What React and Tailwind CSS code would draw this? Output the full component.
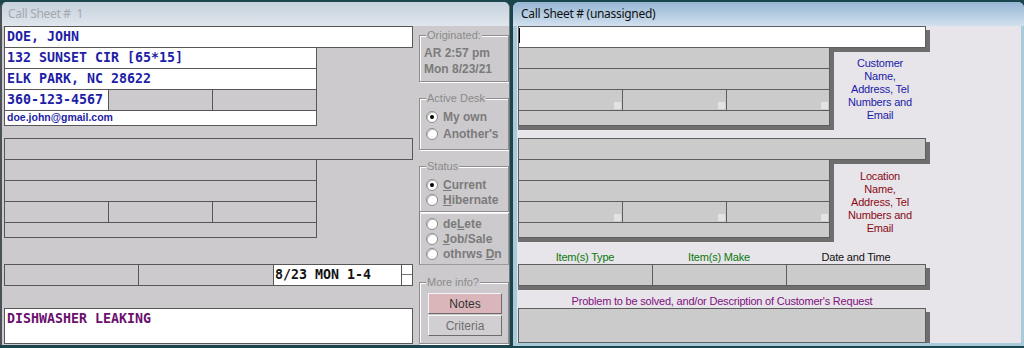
import React from "react";

const MONO = "font-['DejaVu_Sans_Mono','Liberation_Mono',monospace] font-bold text-[13.3px] leading-none";
const SANS = "font-['Liberation_Sans',Arial,sans-serif]";
const LB = "border-[#575757]";
const RB = "border-[#5e5e5e]";
const BLUE = "text-[#1e1ea6]";
const SHADOW = "shadow-[4px_4px_0_#6e6e6e,0_4px_0_#6e6e6e]";

function Radio({ checked, h = "h-[15px]", children }) {
  return (
    <div className={`flex items-center ${h} pl-[6px]`}>
      <span className="w-[12px] h-[12px] shrink-0 rounded-full bg-white border border-[#8c8c8c] shadow-[inset_1px_1px_0_#c4c4c4] flex items-center justify-center">
        {checked && <span className="w-[4px] h-[4px] rounded-full bg-black" />}
      </span>
      <span className={`ml-[5px] ${SANS} text-[12px] font-bold text-[#7b7b7b] leading-none whitespace-nowrap`}>{children}</span>
    </div>
  );
}

function Group({ label, className = "", children }) {
  return (
    <div className={`relative shrink-0 border border-[#8d8d8d] shadow-[inset_1px_1px_0_#fff,1px_1px_0_#fff] ${className}`}>
      {label && (
        <span className={`absolute left-[6px] -top-[8px] px-px bg-[#cdcacd] ${SANS} text-[11px] leading-[14px] text-[#8a8a8a] whitespace-nowrap`}>
          {label}
        </span>
      )}
      {children}
    </div>
  );
}

function LeftFields() {
  const cellText = `flex items-center pl-[2px] pb-px ${MONO}`;
  return (
    <div className="w-[409px] shrink-0 flex flex-col">
      <div className={`h-[22px] border ${LB} bg-white ${cellText} ${BLUE}`}>DOE, JOHN</div>
      <div className={`-mt-px w-[313px] h-[22px] border ${LB} bg-white ${cellText} ${BLUE}`}>132 SUNSET CIR [65*15]</div>
      <div className={`-mt-px w-[313px] h-[22px] border ${LB} bg-white ${cellText} ${BLUE}`}>ELK PARK, NC 28622</div>
      <div className={`-mt-px w-[313px] h-[22px] border ${LB} flex`}>
        <div className={`w-[104px] border-r ${LB} bg-white ${cellText} ${BLUE}`}>360-123-4567</div>
        <div className={`w-[104px] border-r ${LB}`} />
        <div className="flex-1" />
      </div>
      <div className={`-mt-px w-[313px] h-[16px] border ${LB} bg-white flex items-center pl-[2px] ${SANS} text-[10.5px] font-bold ${BLUE}`}>
        doe.john@gmail.com
      </div>

      <div className={`mt-[12px] h-[22px] border ${LB}`} />
      <div className={`-mt-px w-[313px] h-[22px] border ${LB}`} />
      <div className={`-mt-px w-[313px] h-[22px] border ${LB}`} />
      <div className={`-mt-px w-[313px] h-[22px] border ${LB} flex`}>
        <div className={`w-[104px] border-r ${LB}`} />
        <div className={`w-[104px] border-r ${LB}`} />
        <div className="flex-1" />
      </div>
      <div className={`-mt-px w-[313px] h-[16px] border ${LB}`} />

      <div className={`mt-[26px] h-[22px] border ${LB} flex`}>
        <div className={`w-[134px] border-r ${LB}`} />
        <div className={`w-[135px] border-r ${LB}`} />
        <div className={`w-[128px] border-r ${LB} bg-white flex items-center pl-px pb-px ${MONO} text-[#141414]`}>8/23 MON 1-4</div>
        <div className="flex-1 flex flex-col">
          <div className="h-[10px] bg-white border-b border-[#777]" />
          <div className="flex-1 bg-white" />
        </div>
      </div>

      <div className={`mt-[22px] h-[36px] border ${LB} bg-white pl-[2px] pt-[3px] ${MONO} text-[#6a106e]`}>DISHWASHER LEAKING</div>
    </div>
  );
}

function LeftPanel() {
  return (
    <div className="ml-[6px] w-[90px] flex flex-col">
      <Group label="Originated:" className="mt-[9px] h-[47px] pl-[4px] pt-[9px]">
        <div className={`${SANS} font-bold text-[12px] leading-[16px] text-[#7b7b7b] whitespace-nowrap`}>
          AR 2:57 pm
          <br />
          Mon 8/23/21
        </div>
      </Group>
      <Group label="Active Desk" className="mt-[16px] h-[52px] pt-[9px]">
        <Radio checked h="h-[17px]">My own</Radio>
        <Radio h="h-[17px]">Another's</Radio>
      </Group>
      <Group label="Status" className="mt-[16px] h-[46px] pt-[10px]">
        <Radio checked><u>C</u>urrent</Radio>
        <Radio><u>H</u>ibernate</Radio>
      </Group>
      <div className="shrink-0 h-[53px] pt-[3px] border border-t-[#7c7c7c] border-l-[#7c7c7c] border-r-[#9a9a9a] border-b-[#9a9a9a] shadow-[inset_1px_1px_0_#f4f4f4]">
        <Radio>de<u>L</u>ete</Radio>
        <Radio><u>J</u>ob/Sale</Radio>
        <Radio>othrws <u>D</u>n</Radio>
      </div>
      <Group label="More info?" className="mt-[17px] h-[62px] pt-[10px]">
        <div className={`ml-[8px] w-[74px] h-[21px] flex items-center justify-center bg-[#dab6ba] border border-t-[#f6f6f6] border-l-[#f6f6f6] border-r-[#6c6c6c] border-b-[#6c6c6c] ${SANS} text-[12px] text-[#333]`}>
          Notes
        </div>
        <div className={`mt-px ml-[8px] w-[74px] h-[21px] flex items-center justify-center bg-[#d2cfd2] border border-t-[#f6f6f6] border-l-[#f6f6f6] border-r-[#6c6c6c] border-b-[#6c6c6c] ${SANS} text-[12px] text-[#6e6e6e]`}>
          Criteria
        </div>
      </Group>
    </div>
  );
}

function LeftWindow() {
  return (
    <div className="mt-[2px] w-[510px] h-[343px] shrink-0 flex flex-col rounded-t-[6px] overflow-hidden border-l-2 border-r border-l-[#4a5157] border-r-[#72767b] bg-[#cdcacd]">
      <div className="h-[24px] shrink-0 flex items-center pl-[6px] bg-linear-to-b from-[#c5d1dd] to-[#e0e6ec] font-['Noto_Sans',sans-serif] text-[12px] tracking-[-0.3px] text-[#a3a8af] whitespace-pre">
        Call Sheet #  1
      </div>
      <div className="flex-1 flex pl-[2px]">
        <LeftFields />
        <LeftPanel />
      </div>
    </div>
  );
}

function Sq() {
  return <div className="w-[7px] h-[7px] mr-px mb-px bg-[#e3e3e3]" />;
}

function GrayRows() {
  const cell = `flex items-end justify-end`;
  return (
    <div className={`w-[312px] shrink-0 flex flex-col ${SHADOW}`}>
      <div className={`h-[22px] border ${RB} bg-[#cbcbcb]`} />
      <div className={`-mt-px h-[22px] border ${RB} bg-[#cbcbcb]`} />
      <div className={`-mt-px h-[22px] border ${RB} bg-[#cbcbcb] flex`}>
        <div className={`w-[104px] border-r ${RB} ${cell}`}><Sq /></div>
        <div className={`w-[104px] border-r ${RB} ${cell}`}><Sq /></div>
        <div className={`flex-1 ${cell}`}><Sq /></div>
      </div>
      <div className={`-mt-px h-[16px] border ${RB} bg-[#cbcbcb]`} />
    </div>
  );
}

function SideLabel({ color, pt, children }) {
  return (
    <div className={`ml-[4px] w-[92px] text-center ${pt} ${SANS} text-[11px] tracking-[-0.2px] leading-[13px] ${color}`}>{children}</div>
  );
}

function RightWindow() {
  return (
    <div className="ml-[3px] mt-[2px] w-[511px] h-[344px] shrink-0 flex flex-col rounded-t-[6px] overflow-hidden bg-[#a8cadb]">
      <div className="h-[24px] shrink-0 flex items-center pl-[8px] bg-linear-to-b from-[#97b6d4] to-[#d1e0ee] font-['Noto_Sans',sans-serif] text-[12px] tracking-[-0.3px] text-[#111]">
        Call Sheet # (unassigned)
      </div>
      <div className="flex-1 ml-[4px] mr-[3px] mb-[3px] bg-[#e7e5ea] pl-px flex flex-col overflow-hidden">
        <div className={`w-[408px] h-[22px] shrink-0 border ${RB} bg-white ${SHADOW}`}>
          <div className="mt-px w-px h-[15px] bg-black" />
        </div>
        <div className="-mt-px flex">
          <GrayRows />
          <SideLabel color="text-[#1b1ba8]" pt="pt-[10px]">
            Customer<br />Name,<br />Address, Tel<br />Numbers and<br />Email
          </SideLabel>
        </div>

        <div className={`mt-[12px] w-[408px] h-[22px] shrink-0 border ${RB} bg-[#cbcbcb] ${SHADOW}`} />
        <div className="-mt-px flex">
          <GrayRows />
          <SideLabel color="text-[#8a0a14]" pt="pt-[11px]">
            Location<br />Name,<br />Address, Tel<br />Numbers and<br />Email
          </SideLabel>
        </div>

        <div className={`mt-[12px] w-[408px] h-[14px] shrink-0 flex ${SANS} text-[11px] tracking-[-0.2px] leading-[14px]`}>
          <div className="w-[134px] text-center text-[#0a780a]">Item(s) Type</div>
          <div className="w-[134px] text-center text-[#0a780a]">Item(s) Make</div>
          <div className="flex-1 text-center text-[#111]">Date and Time</div>
        </div>
        <div className={`w-[408px] h-[22px] shrink-0 border ${RB} bg-[#cbcbcb] flex ${SHADOW}`}>
          <div className={`w-[134px] border-r ${RB}`} />
          <div className={`w-[134px] border-r ${RB}`} />
          <div className="flex-1" />
        </div>

        <div className={`mt-[8px] w-[408px] h-[14px] shrink-0 text-center ${SANS} text-[11px] tracking-[-0.2px] leading-[14px] text-[#80107e]`}>
          Problem to be solved, and/or Description of Customer's Request
        </div>
        <div className={`w-[408px] h-[35px] shrink-0 border ${RB} bg-[#cbcbcb] ${SHADOW}`} />
      </div>
    </div>
  );
}

export default function App() {
  return (
    <div className="w-[1024px] h-[348px] bg-[#1a454c] flex overflow-hidden">
      <LeftWindow />
      <RightWindow />
    </div>
  );
}
